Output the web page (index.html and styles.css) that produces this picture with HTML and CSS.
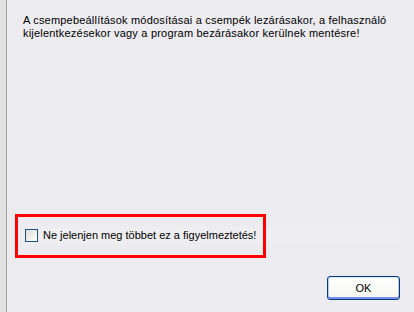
FILE: index.html
```html
<!DOCTYPE html>
<html lang="hu">
<head>
    <meta charset="UTF-8">
    <meta name="viewport" content="width=device-width, initial-scale=1.0">
    <title>Figyelmeztetés</title>
    <link rel="stylesheet" href="styles.css">
</head>
<body>
    <div class="dialog">
        <div class="side"></div>
        <div class="content">
            <p class="message">
                A csempebeállítások módosításai a csempék lezárásakor, a felhasználó<br>
                kijelentkezésekor vagy a program bezárásakor kerülnek mentésre!
            </p>

            <div class="option-row">
                <label class="option">
                    <input type="checkbox" class="check">
                    <span>Ne jelenjen meg többet ez a figyelmeztetés!</span>
                </label>
                <div class="highlight"></div>
            </div>

            <div class="actions">
                <button class="ok">OK</button>
            </div>
        </div>
    </div>
</body>
</html>
```

FILE: styles.css
```css
body {
    margin: 0;
    font-family: 'Liberation Sans', Arial, sans-serif;
    font-size: 11px;
    color: #000;
    background-color: #ecebf0;
}

.dialog {
    display: flex;
    height: 312px;
}

.side {
    width: 6px;
    background-color: #e1e1e1;
    border-right: 1px solid #a0a0a0;
}

.content {
    flex: 1;
    display: flex;
    flex-direction: column;
}

.message {
    margin: 14px 0 0 16px;
    line-height: 13px;
    letter-spacing: 0.2px;
}

.option-row {
    position: relative;
    margin: 187px 14px 0 15px;
    height: 16px;
    background-color: #eeeef0;
}

.option {
    display: flex;
    align-items: center;
    height: 16px;
    padding-left: 3px;
}

.check {
    appearance: none;
    width: 13px;
    height: 13px;
    margin: 1px 5px 0 0;
    border: 1px solid #1c5180;
    background: linear-gradient(135deg, #dcdcd7, #ffffff);
    box-sizing: border-box;
}

.highlight {
    position: absolute;
    left: -7px;
    top: -13px;
    width: 251px;
    height: 44px;
    border: 3px solid #ff0000;
    box-sizing: border-box;
}

.actions {
    display: flex;
    justify-content: flex-end;
    margin: 33px 14px 0 0;
}

.ok {
    width: 73px;
    height: 24px;
    padding: 0;
    font-family: 'Liberation Sans', Arial, sans-serif;
    font-size: 11px;
    color: #000;
    border: 1px solid #003c74;
    border-radius: 3px;
    background: linear-gradient(#ffffff, #f5f4ef);
    box-shadow: inset 0 -2px #7b8ef0, inset 1px 0 #b9c5f5, inset -1px 0 #b9c5f5, inset 0 1px #dfe6fd;
}
```
